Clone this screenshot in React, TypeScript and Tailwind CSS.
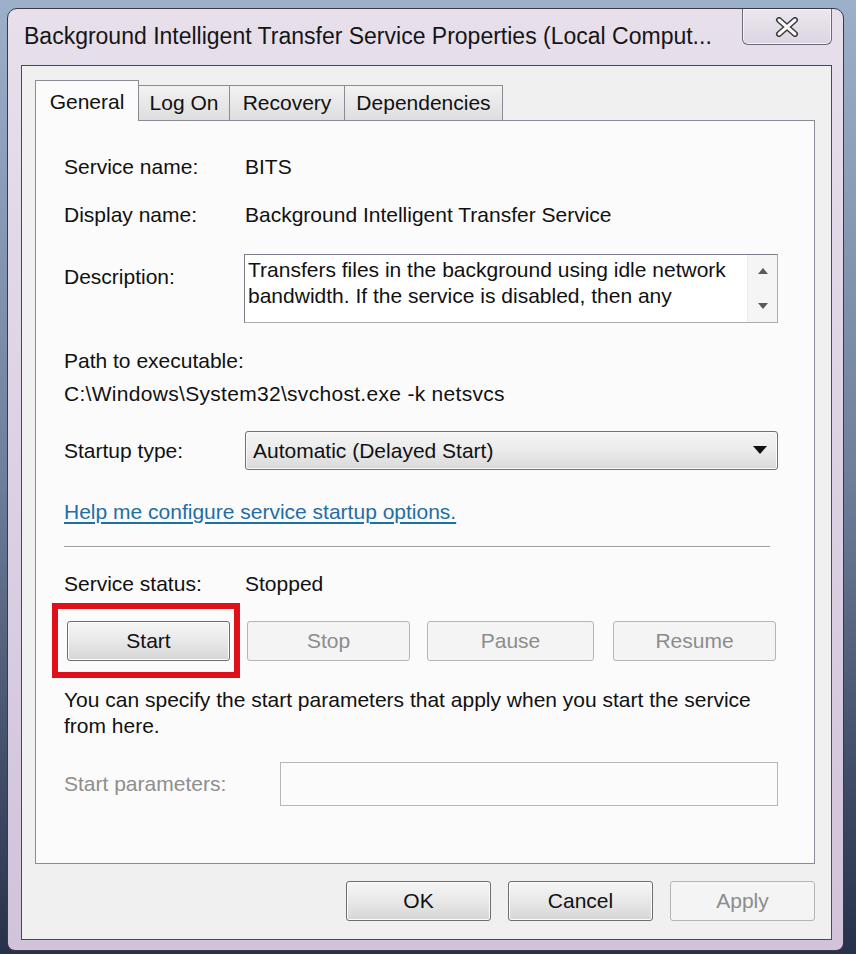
import React from "react";

const font = "font-['Liberation_Sans',Arial,sans-serif]";

const Btn = ({
  label,
  w,
  disabled,
  className = "",
}: {
  label: string;
  w: string;
  disabled?: boolean;
  className?: string;
}) => (
  <div
    className={`${w} h-[40px] flex items-center justify-center rounded-[3px] border text-[21px] ${
      disabled
        ? "border-[#b3b5b8] bg-[#f4f4f4] text-[#8c8c8c]"
        : "border-[#6e6e6e] bg-linear-to-b from-[#f6f6f6] via-[#e8e8e8] to-[#d6d6d6] text-[#111] shadow-[inset_0_0_0_1px_#fcfcfc]"
    } ${className}`}
  >
    {label}
  </div>
);

export default function App() {
  return (
    <div
      className={`w-[856px] h-[954px] overflow-hidden bg-linear-to-b from-[#9db0ca] via-[#6f7f9b] to-[#27314a] pt-[8px] pl-[7px] ${font}`}
    >
      {/* Window */}
      <div className="w-[837px] h-[943px] flex flex-col rounded-t-[10px] rounded-b-[8px] border border-[#3b3848] bg-linear-to-b from-[#e7e0eb] via-[#dcd1e3] to-[#d1c3da]">
        {/* Title bar */}
        <div className="h-[56px] flex justify-between pl-[16px] pr-[11px]">
          <div className="pt-[13px] text-[23px] leading-[28px] text-[#151515] whitespace-nowrap">
            Background Intelligent Transfer Service Properties (Local Comput...
          </div>
          <div className="w-[90px] h-[36px] flex items-center justify-center rounded-b-[6px] border border-t-0 border-[#6d6878] bg-linear-to-b from-[#ece7ef] to-[#ddd5e2] shadow-[inset_0_0_0_1px_#f6f3f8]">
            <svg width="26" height="20" viewBox="0 0 26 20">
              <path d="M5 3 L21 17 M21 3 L5 17" stroke="#3a3a3a" strokeWidth="6" strokeLinecap="round" />
              <path d="M5 3 L21 17 M21 3 L5 17" stroke="#fafafa" strokeWidth="3" strokeLinecap="round" />
            </svg>
          </div>
        </div>

        {/* Client area */}
        <div className="ml-[13px] mr-[11px] flex-1 border border-[#4a4858] bg-[#f0f0f0] pt-[14px] pl-[13px] pr-[16px] pb-[17px] flex flex-col">
          {/* Tabs */}
          <div className="flex items-end text-[21px] text-[#111]">
            <div className="relative z-10 -mb-px h-[41px] w-[104px] border border-b-0 border-[#898c95] bg-[#fbfbfb] flex items-start justify-center pt-[5px]">
              General
            </div>
            <div className="h-[35px] w-[92px] -ml-px border border-b-0 border-[#898c95] bg-linear-to-b from-[#f2f2f2] to-[#dedede] flex items-center justify-center">
              Log On
            </div>
            <div className="h-[35px] w-[116px] -ml-px border border-b-0 border-[#898c95] bg-linear-to-b from-[#f2f2f2] to-[#dedede] flex items-center justify-center">
              Recovery
            </div>
            <div className="h-[35px] w-[159px] -ml-px border border-b-0 border-[#898c95] bg-linear-to-b from-[#f2f2f2] to-[#dedede] flex items-center justify-center">
              Dependencies
            </div>
          </div>

          {/* Tab panel */}
          <div className="h-[744px] border border-[#898c95] bg-[#fbfbfb] pl-[28px] pr-[36px] text-[21px] text-[#111] flex flex-col">
            <div className="mt-[34px] h-[24px] flex items-center">
              <span className="w-[181px]">Service name:</span>
              <span>BITS</span>
            </div>
            <div className="mt-[24px] h-[24px] flex items-center">
              <span className="w-[181px]">Display name:</span>
              <span>Background Intelligent Transfer Service</span>
            </div>
            <div className="mt-[27px] flex">
              <span className="w-[180px] mt-[11px] leading-[24px]">Description:</span>
              <div className="flex-1 h-[69px] flex border border-[#abadb3] border-t-[#7a7d85] border-l-[#7a7d85] bg-white">
                <div className="flex-1 pl-[3px] pt-[2px] leading-[26px]">
                  Transfers files in the background using idle network bandwidth. If the service is disabled, then any
                </div>
                <div className="w-[30px] flex flex-col items-center justify-between py-[12px] bg-[#f5f5f5] border-l border-[#ececec]">
                  <svg width="12" height="8" viewBox="0 0 12 8">
                    <path d="M1 7 L6 1 L11 7 Z" fill="#5a5a5a" />
                  </svg>
                  <svg width="12" height="8" viewBox="0 0 12 8">
                    <path d="M1 1 L11 1 L6 7 Z" fill="#5a5a5a" />
                  </svg>
                </div>
              </div>
            </div>
            <div className="mt-[26px] h-[24px] flex items-center">Path to executable:</div>
            <div className="mt-[9px] h-[24px] flex items-center tracking-[0.3px]">
              C:\Windows\System32\svchost.exe -k netsvcs
            </div>
            <div className="mt-[25px] flex items-center">
              <span className="w-[181px]">Startup type:</span>
              <div className="flex-1 h-[39px] flex items-center justify-between rounded-[3px] border border-[#707070] bg-linear-to-b from-[#f4f4f4] via-[#ebebeb] to-[#d9d9d9] pl-[7px] pr-[10px] shadow-[inset_0_0_0_1px_#fafafa]">
                <span>Automatic (Delayed Start)</span>
                <svg width="14" height="9" viewBox="0 0 14 9">
                  <path d="M0 0 L14 0 L7 8 Z" fill="#111" />
                </svg>
              </div>
            </div>
            <div className="mt-[30px] h-[24px] flex items-center">
              <span className="text-[#1f6ea6] underline underline-offset-[3px]">
                Help me configure service startup options.
              </span>
            </div>
            <div className="mt-[22px] w-[706px] h-[2px] border-t border-[#a0a0a0] border-b border-b-white" />
            <div className="mt-[24px] h-[24px] flex items-center">
              <span className="w-[181px]">Service status:</span>
              <span>Stopped</span>
            </div>
            <div className="mt-[25px] flex items-center">
              <div className="relative ml-[3px]">
                <Btn label="Start" w="w-[163px]" />
                <div className="absolute -left-[15px] -top-[18px] w-[188px] h-[75px] border-[6px] border-[#de1019]" />
              </div>
              <Btn label="Stop" w="w-[163px]" disabled className="ml-[17px]" />
              <Btn label="Pause" w="w-[167px]" disabled className="ml-[17px]" />
              <Btn label="Resume" w="w-[163px]" disabled className="ml-[19px]" />
            </div>
            <div className="mt-[26px] leading-[26px] w-[713px]">
              You can specify the start parameters that apply when you start the service from here.
            </div>
            <div className="mt-[23px] flex items-center">
              <span className="w-[216px] text-[#8e8e8e]">Start parameters:</span>
              <div className="flex-1 h-[44px] border border-[#b5b7bb] bg-[#fbfbfb]" />
            </div>
          </div>

          {/* Dialog buttons */}
          <div className="mt-[17px] flex justify-end">
            <Btn label="OK" w="w-[145px]" />
            <Btn label="Cancel" w="w-[145px]" className="ml-[17px]" />
            <Btn label="Apply" w="w-[145px]" disabled className="ml-[17px]" />
          </div>
        </div>
        <div className="h-[10px]" />
      </div>
    </div>
  );
}
